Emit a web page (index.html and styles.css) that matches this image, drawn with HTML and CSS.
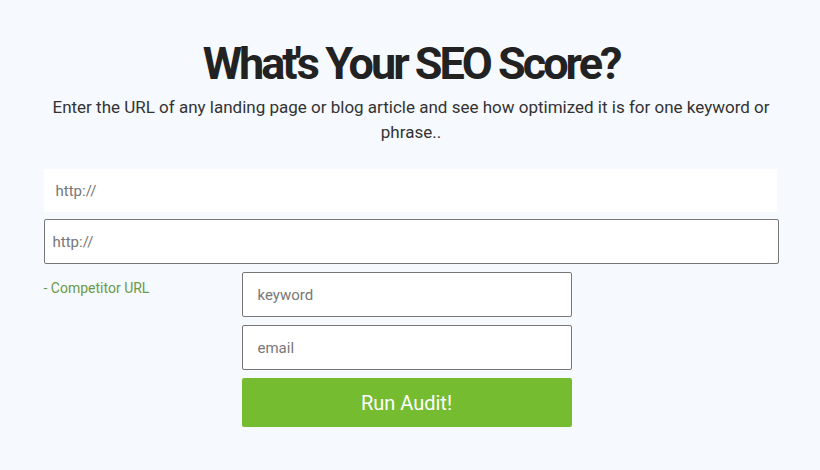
FILE: index.html
```html
<!DOCTYPE html>
<html lang="en">
  <head>
    <meta charset="UTF-8" />
    <meta name="viewport" content="width=device-width, initial-scale=1.0" />
    <title>SEO Score</title>
    <link rel="stylesheet" href="styles.css">
  </head>
  <body>
    <div id="audit">
      <h1 class="title">What's Your SEO Score?</h1>
      <p class="intro">Enter the URL of any landing page or blog article and see how optimized it is for one keyword or phrase..</p>

      <input class="field plain" type="text" placeholder="http://" />
      <input class="field url" type="text" placeholder="http://" />

      <div class="row">
        <div class="competitor">- Competitor URL</div>
        <div class="side">
          <input class="field small" type="text" placeholder="keyword" />
          <input class="field small" type="text" placeholder="email" />
          <button class="run">Run Audit!</button>
        </div>
      </div>
    </div>
  </body>
</html>
```

FILE: styles.css
```css
body {
  margin: 0;
  background-color: #f6f9fd;
  font-family: Roboto, "Liberation Sans", sans-serif;
}

#audit {
  width: 735px;
  margin: 0 auto;
  padding-top: 36px;
  padding-left: 2px;
  display: flex;
  flex-direction: column;
}

.title {
  margin: 0;
  text-align: center;
  font-size: 45px;
  font-weight: 700;
  letter-spacing: -3px;
  color: #222;
  line-height: 56px;
}

.intro {
  margin: 3px 0 0;
  text-align: center;
  font-size: 17px;
  line-height: 25px;
  color: #333;
}

.field {
  box-sizing: border-box;
  font-family: inherit;
  font-size: 15px;
  color: #333;
  background: #fff;
  border: 1px solid #777;
  border-radius: 2px;
  outline: none;
}

.field::placeholder {
  color: #777;
}

.plain {
  margin-top: 24px;
  width: 733px;
  height: 43px;
  border: none;
  padding: 0 12px;
}

.url {
  margin-top: 7px;
  width: 735px;
  height: 45px;
  padding: 0 8px;
}

.row {
  display: flex;
  margin-top: 8px;
}

.competitor {
  width: 198px;
  padding-top: 8px;
  font-size: 14px;
  color: #6a9a4a;
}

.side {
  width: 330px;
  display: flex;
  flex-direction: column;
  gap: 8px;
}

.small {
  width: 330px;
  height: 45px;
  padding: 0 15px;
}

.run {
  height: 49px;
  border: none;
  border-radius: 2px;
  background-color: #75bc31;
  color: #fff;
  font-family: inherit;
  font-size: 20px;
  cursor: pointer;
}
```
